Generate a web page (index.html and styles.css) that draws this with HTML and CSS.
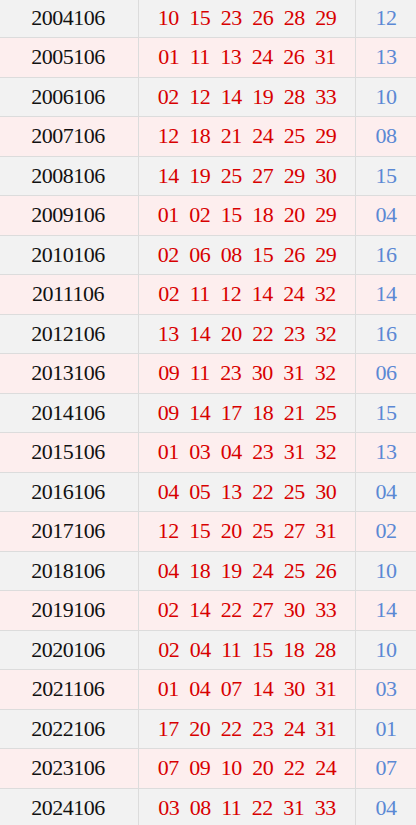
FILE: index.html
```html
<!DOCTYPE html>
<html lang="zh">
<head>
<meta charset="utf-8">
<link rel="stylesheet" href="styles.css">
</head>
<body>
<div class="table">
  <div class="row odd"><div class="issue">2004106</div><div class="reds"><span>10</span><span>15</span><span>23</span><span>26</span><span>28</span><span>29</span></div><div class="blue">12</div></div>
  <div class="row even"><div class="issue">2005106</div><div class="reds"><span>01</span><span>11</span><span>13</span><span>24</span><span>26</span><span>31</span></div><div class="blue">13</div></div>
  <div class="row odd"><div class="issue">2006106</div><div class="reds"><span>02</span><span>12</span><span>14</span><span>19</span><span>28</span><span>33</span></div><div class="blue">10</div></div>
  <div class="row even"><div class="issue">2007106</div><div class="reds"><span>12</span><span>18</span><span>21</span><span>24</span><span>25</span><span>29</span></div><div class="blue">08</div></div>
  <div class="row odd"><div class="issue">2008106</div><div class="reds"><span>14</span><span>19</span><span>25</span><span>27</span><span>29</span><span>30</span></div><div class="blue">15</div></div>
  <div class="row even"><div class="issue">2009106</div><div class="reds"><span>01</span><span>02</span><span>15</span><span>18</span><span>20</span><span>29</span></div><div class="blue">04</div></div>
  <div class="row odd"><div class="issue">2010106</div><div class="reds"><span>02</span><span>06</span><span>08</span><span>15</span><span>26</span><span>29</span></div><div class="blue">16</div></div>
  <div class="row even"><div class="issue">2011106</div><div class="reds"><span>02</span><span>11</span><span>12</span><span>14</span><span>24</span><span>32</span></div><div class="blue">14</div></div>
  <div class="row odd"><div class="issue">2012106</div><div class="reds"><span>13</span><span>14</span><span>20</span><span>22</span><span>23</span><span>32</span></div><div class="blue">16</div></div>
  <div class="row even"><div class="issue">2013106</div><div class="reds"><span>09</span><span>11</span><span>23</span><span>30</span><span>31</span><span>32</span></div><div class="blue">06</div></div>
  <div class="row odd"><div class="issue">2014106</div><div class="reds"><span>09</span><span>14</span><span>17</span><span>18</span><span>21</span><span>25</span></div><div class="blue">15</div></div>
  <div class="row even"><div class="issue">2015106</div><div class="reds"><span>01</span><span>03</span><span>04</span><span>23</span><span>31</span><span>32</span></div><div class="blue">13</div></div>
  <div class="row odd"><div class="issue">2016106</div><div class="reds"><span>04</span><span>05</span><span>13</span><span>22</span><span>25</span><span>30</span></div><div class="blue">04</div></div>
  <div class="row even"><div class="issue">2017106</div><div class="reds"><span>12</span><span>15</span><span>20</span><span>25</span><span>27</span><span>31</span></div><div class="blue">02</div></div>
  <div class="row odd"><div class="issue">2018106</div><div class="reds"><span>04</span><span>18</span><span>19</span><span>24</span><span>25</span><span>26</span></div><div class="blue">10</div></div>
  <div class="row even"><div class="issue">2019106</div><div class="reds"><span>02</span><span>14</span><span>22</span><span>27</span><span>30</span><span>33</span></div><div class="blue">14</div></div>
  <div class="row odd"><div class="issue">2020106</div><div class="reds"><span>02</span><span>04</span><span>11</span><span>15</span><span>18</span><span>28</span></div><div class="blue">10</div></div>
  <div class="row even"><div class="issue">2021106</div><div class="reds"><span>01</span><span>04</span><span>07</span><span>14</span><span>30</span><span>31</span></div><div class="blue">03</div></div>
  <div class="row odd"><div class="issue">2022106</div><div class="reds"><span>17</span><span>20</span><span>22</span><span>23</span><span>24</span><span>31</span></div><div class="blue">01</div></div>
  <div class="row even"><div class="issue">2023106</div><div class="reds"><span>07</span><span>09</span><span>10</span><span>20</span><span>22</span><span>24</span></div><div class="blue">07</div></div>
  <div class="row odd"><div class="issue">2024106</div><div class="reds"><span>03</span><span>08</span><span>11</span><span>22</span><span>31</span><span>33</span></div><div class="blue">04</div></div>
</div>
</body>
</html>
```
FILE: styles.css
```css
html, body {
  margin: 0;
  padding: 0;
  overflow: hidden;
  background: #ffffff;
}
.table {
  margin-top: -1.5px;
  font-family: "Liberation Serif", "Noto Sans CJK SC", serif;
  font-size: 22px;
  letter-spacing: -0.5px;
}
.row {
  display: grid;
  grid-template-columns: 139px 217px 60px;
  height: 39.5px;
  box-sizing: border-box;
  border-bottom: 1px solid #dcdcdc;
}
.row.odd { background: #f2f2f2; }
.row.even { background: #fdeeee; }
.row > div {
  display: flex;
  align-items: center;
  justify-content: center;
  box-sizing: border-box;
}
.issue {
  color: #111111;
  border-right: 1px solid #dcdcdc;
  padding-right: 2px;
}
.reds {
  color: #d80000;
  gap: 10.5px;
  border-right: 1px solid #dcdcdc;
}
.blue {
  color: #5b88d4;
}
```
